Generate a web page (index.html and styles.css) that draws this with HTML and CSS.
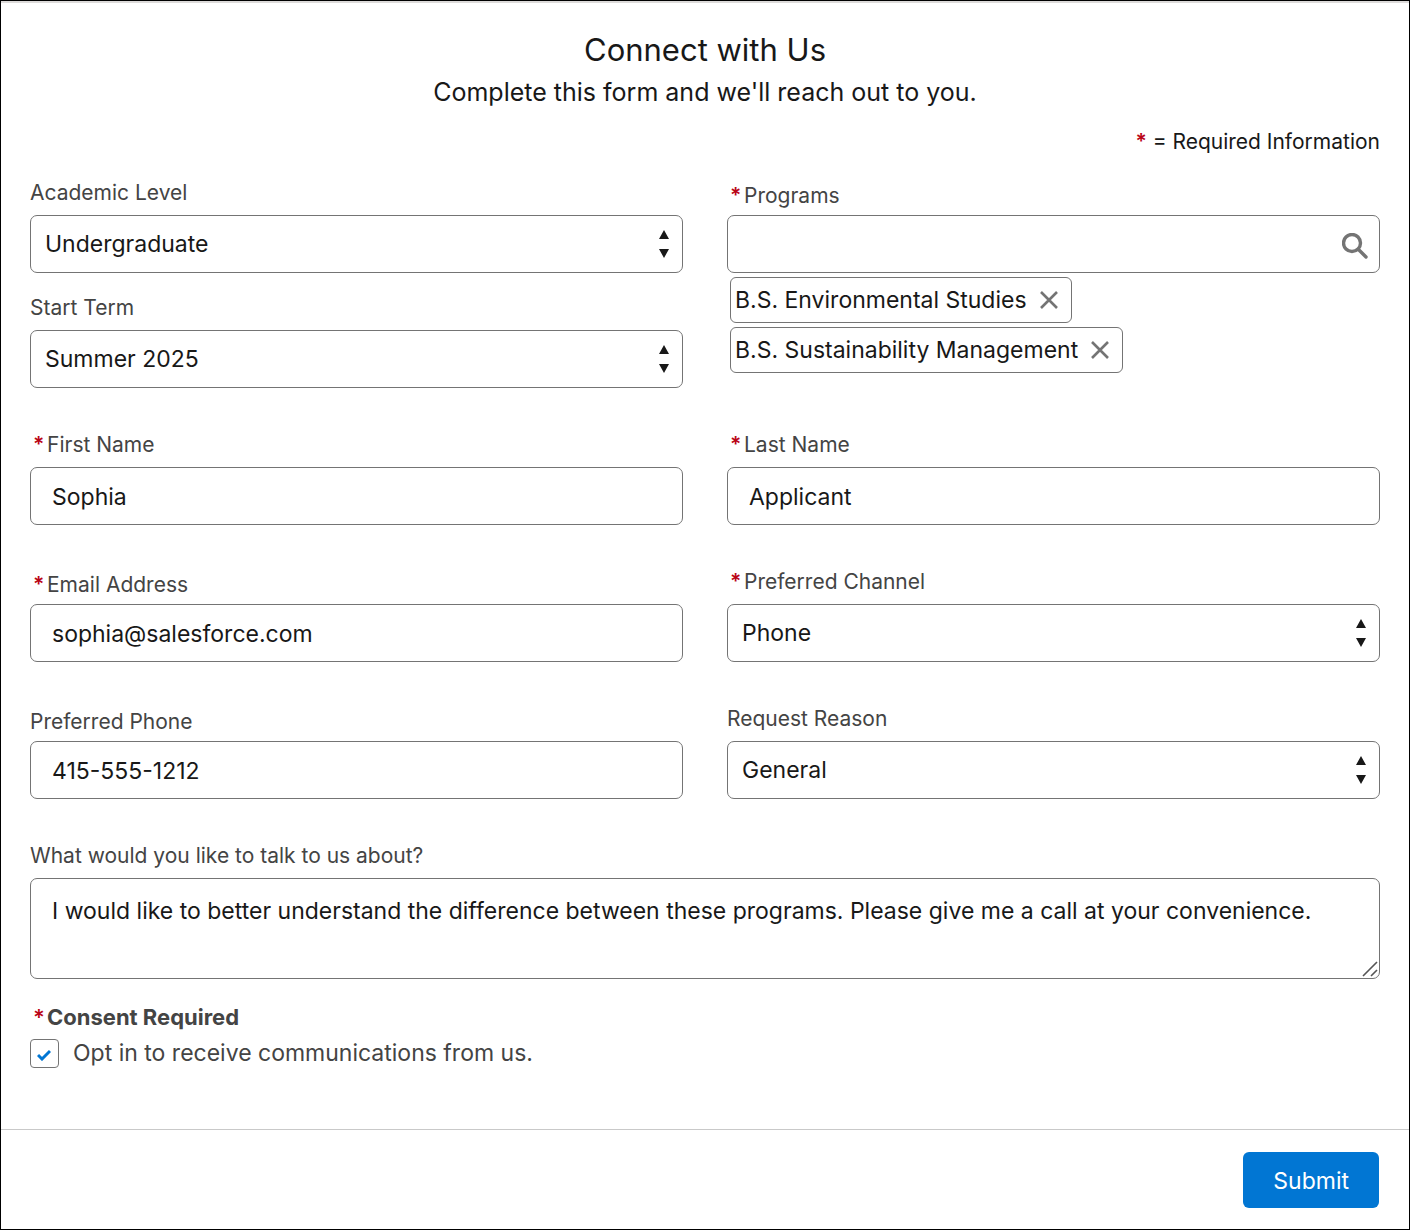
FILE: index.html
```html
<!DOCTYPE html>
<html lang="en">
<head>
  <meta charset="UTF-8" />
  <meta name="viewport" content="width=device-width, initial-scale=1" />
  <title>Connect with Us</title>
  <link rel="stylesheet" href="styles.css">
</head>
<body>
  <form class="page">
    <header class="intro">
      <h1>Connect with Us</h1>
      <p>Complete this form and we'll reach out to you.</p>
    </header>

    <div class="fields">
      <p class="legend"><span class="required">*</span> = Required Information</p>

      <div class="stack">
        <div class="field">
          <label for="level">Academic Level</label>
          <div class="control">
            <select id="level"><option>Undergraduate</option></select>
            <svg class="arrows" viewBox="0 0 10 28"><path d="M5 0l5 9H0zM0 19h10l-5 9z"/></svg>
          </div>
        </div>
        <div class="field">
          <label for="term">Start Term</label>
          <div class="control">
            <select id="term"><option>Summer 2025</option></select>
            <svg class="arrows" viewBox="0 0 10 28"><path d="M5 0l5 9H0zM0 19h10l-5 9z"/></svg>
          </div>
        </div>
      </div>

      <div class="field">
        <label for="programs" class="low"><span class="required">*</span>Programs</label>
        <div class="control">
          <input id="programs" type="text">
          <svg class="search" viewBox="0 0 26 26"><circle cx="10" cy="10" r="8.5"/><path d="M16.5 16.5l7.5 7.5"/></svg>
        </div>
        <ul class="pills">
          <li>B.S. Environmental Studies
            <button type="button" aria-label="Remove"><svg viewBox="0 0 18 18"><path d="M1 1l16 16M17 1L1 17"/></svg></button>
          </li>
          <li>B.S. Sustainability Management
            <button type="button" aria-label="Remove"><svg viewBox="0 0 18 18"><path d="M1 1l16 16M17 1L1 17"/></svg></button>
          </li>
        </ul>
      </div>

      <div class="field">
        <label for="first"><span class="required">*</span>First Name</label>
        <input id="first" type="text" value="Sophia">
      </div>
      <div class="field">
        <label for="last"><span class="required">*</span>Last Name</label>
        <input id="last" type="text" value="Applicant">
      </div>

      <div class="field">
        <label for="email" class="low"><span class="required">*</span>Email Address</label>
        <input id="email" type="email" value="sophia@salesforce.com">
      </div>
      <div class="field">
        <label for="channel"><span class="required">*</span>Preferred Channel</label>
        <div class="control">
          <select id="channel"><option>Phone</option></select>
          <svg class="arrows" viewBox="0 0 10 28"><path d="M5 0l5 9H0zM0 19h10l-5 9z"/></svg>
        </div>
      </div>

      <div class="field">
        <label for="phone" class="low">Preferred Phone</label>
        <input id="phone" type="tel" value="415-555-1212">
      </div>
      <div class="field">
        <label for="reason">Request Reason</label>
        <div class="control">
          <select id="reason"><option>General</option></select>
          <svg class="arrows" viewBox="0 0 10 28"><path d="M5 0l5 9H0zM0 19h10l-5 9z"/></svg>
        </div>
      </div>

      <div class="field wide">
        <label for="topic">What would you like to talk to us about?</label>
        <div class="control">
          <textarea id="topic">I would like to better understand the difference between these programs. Please give me a call at your convenience.</textarea>
          <svg class="grip" viewBox="0 0 16 16"><path d="M1 15L15 1M9 15l6-6"/></svg>
        </div>
      </div>
    </div>

    <fieldset class="consent">
      <legend><span class="required">*</span>Consent Required</legend>
      <div class="check">
        <span class="box">
          <input id="optin" type="checkbox" checked>
          <svg class="tick" viewBox="0 0 14 12"><path d="M1 6l4 4 8-8"/></svg>
        </span>
        <label for="optin">Opt in to receive communications from us.</label>
      </div>
    </fieldset>

    <footer class="actions">
      <button type="submit" class="submit">Submit</button>
    </footer>
  </form>
</body>
</html>
```

FILE: styles.css
```css
* {
  box-sizing: border-box;
}
body {
  margin: 0;
  background: #fff;
  color: #181818;
  font-family: Inter, "Liberation Sans", sans-serif;
  font-size: 23px;
}
.page {
  min-height: 100vh;
  border: 1px solid #000;
  box-shadow: inset 0 2px #dddbda;
}
.intro {
  padding: 29px 29px 19px;
  text-align: center;
}
h1 {
  margin: 0 0 6px;
  font-size: 31px;
  line-height: 40px;
  font-weight: 400;
}
.intro p {
  margin: 0;
  font-size: 25px;
  line-height: 32px;
}
.fields {
  display: grid;
  grid-template-columns: 1fr 1fr;
  gap: 41px 44px;
  padding: 0 29px;
}
.legend {
  grid-column: 1 / -1;
  margin: 0 0 -21px;
  font-size: 21px;
  line-height: 30px;
  text-align: right;
}
.stack {
  display: flex;
  flex-direction: column;
  gap: 19px;
}
.wide {
  grid-column: 1 / -1;
}
.field label {
  display: block;
  padding-top: 1px;
  padding-bottom: 7px;
  color: #444;
  font-size: 21px;
  line-height: 30px;
}
.field .low {
  padding-top: 4px;
  padding-bottom: 4px;
}
.required {
  color: #ba0517;
  font-weight: 600;
}
label .required,
.consent legend .required {
  display: inline-block;
  width: 17px;
  padding-left: 3px;
}
.control {
  position: relative;
}
input[type="text"],
input[type="email"],
input[type="tel"],
select,
textarea {
  display: block;
  width: 100%;
  height: 58px;
  margin: 0;
  padding: 2px 21px 0;
  border: 1px solid #747474;
  border-radius: 7px;
  background: #fff;
  color: #181818;
  font: inherit;
}
select {
  appearance: none;
  padding: 0 14px;
}
textarea {
  height: 101px;
  padding: 14px 21px;
  line-height: 36px;
  resize: none;
}
.arrows {
  position: absolute;
  top: 15px;
  right: 14px;
  width: 10px;
  height: 28px;
  fill: #181818;
  pointer-events: none;
}
.search {
  position: absolute;
  top: 18px;
  right: 12px;
  width: 26px;
  height: 26px;
  fill: none;
  stroke: #747474;
  stroke-width: 3.4;
  stroke-linecap: round;
}
.grip {
  position: absolute;
  right: 2px;
  bottom: 2px;
  width: 16px;
  height: 16px;
  fill: none;
  stroke: #555;
  stroke-width: 1.6;
  pointer-events: none;
}
.pills {
  display: flex;
  flex-direction: column;
  align-items: flex-start;
  gap: 4px;
  margin: 4px 0 0;
  padding: 0 3px;
  list-style: none;
}
.pills li {
  display: flex;
  align-items: center;
  gap: 13px;
  height: 46px;
  padding: 0 13px 0 4px;
  border: 1px solid #747474;
  border-radius: 6px;
}
.pills button {
  display: flex;
  padding: 0;
  border: 0;
  background: none;
  cursor: pointer;
}
.pills svg {
  width: 18px;
  height: 18px;
  stroke: #747474;
  stroke-width: 2.6;
}
.consent {
  margin: 22px 29px 61px;
  padding: 0;
  border: 0;
  color: #444;
}
.consent legend {
  padding: 1px 0 7px;
  font-size: 22px;
  line-height: 30px;
  font-weight: 700;
}
.check {
  display: flex;
  align-items: center;
  gap: 14px;
  line-height: 29px;
}
.box {
  position: relative;
  display: flex;
}
.box input {
  appearance: none;
  width: 29px;
  height: 29px;
  margin: 0;
  border: 1px solid #747474;
  border-radius: 4px;
  background: #fff;
}
.tick {
  position: absolute;
  top: 10px;
  left: 7px;
  width: 14px;
  height: 12px;
  fill: none;
  stroke: #0176d3;
  stroke-width: 3;
  pointer-events: none;
  visibility: hidden;
}
.box input:checked + .tick {
  visibility: visible;
}
.actions {
  display: flex;
  justify-content: flex-end;
  padding: 22px 30px 20px;
  border-top: 1px solid #c9c9c9;
}
.submit {
  height: 56px;
  padding: 1px 30px 0;
  border: 0;
  border-radius: 6px;
  background: #0176d3;
  color: #fff;
  font: inherit;
  cursor: pointer;
}
.submit:hover {
  background: #014486;
}
```
